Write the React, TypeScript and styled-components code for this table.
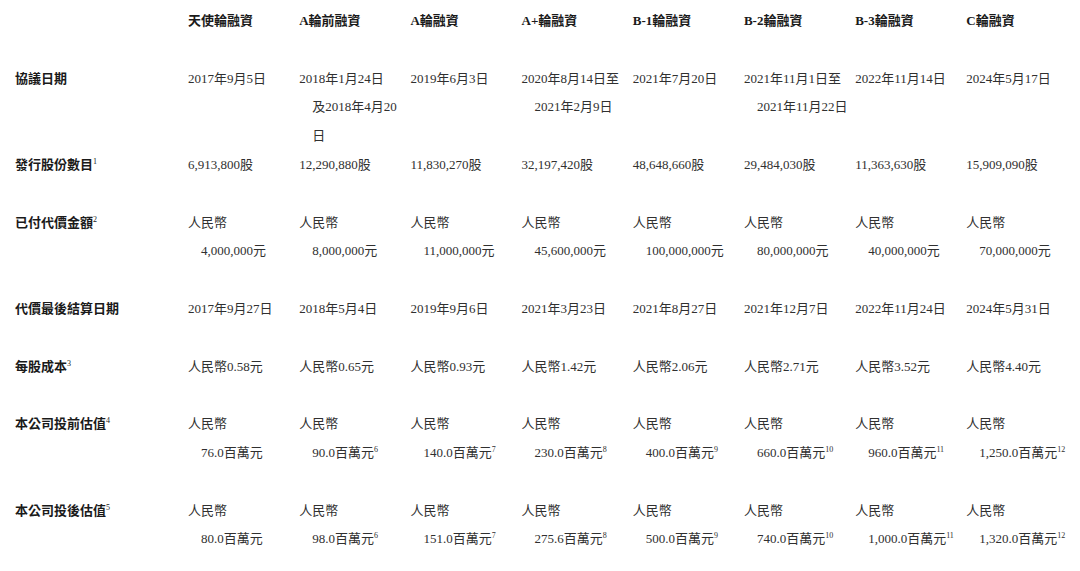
import React from "react";
import styled, { createGlobalStyle } from "styled-components";

const Global = createGlobalStyle`
  html, body { margin: 0; padding: 0; background: #ffffff; }
  body {
    font-family: "Liberation Serif", "Noto Sans CJK TC", serif;
    -webkit-font-smoothing: antialiased;
  }
`;

const Page = styled.div`
  width: 1080px;
  height: 571px;
  overflow: hidden;
  box-sizing: border-box;
  padding: 7px 0 0 15px;
  background: #fff;
`;

const Table = styled.div`
  display: grid;
  grid-template-columns: 173px repeat(7, 111.2px) 1fr;
  font-size: 13px;
  line-height: 28.8px;
  color: #303030;
`;

const Cell = styled.div<{ $pad: boolean }>`
  white-space: nowrap;
  padding-bottom: ${(p) => (p.$pad ? "28.8px" : "0")};
  padding-left: 1em;
  text-indent: -1em;
`;

const HeadCell = styled(Cell)`
  font-weight: 700;
  color: #1a1a1a;
`;

const Label = styled(Cell)`
  font-weight: 700;
  color: #1a1a1a;
  padding-left: 0;
  text-indent: 0;
`;

const Sup = styled.sup`
  font-size: 8px;
  line-height: 0;
  vertical-align: 5px;
  margin-left: 0;
  font-weight: 400;
`;

type Line = { t: string; n?: string };
type Row = { label: Line; cells: Line[][]; pad: boolean };

const headers = [
  "天使輪融資",
  "A輪前融資",
  "A輪融資",
  "A+輪融資",
  "B-1輪融資",
  "B-2輪融資",
  "B-3輪融資",
  "C輪融資",
];

const rmb = (v: string, n?: string): Line[] => [{ t: "人民幣" }, { t: v, n }];
const one = (t: string): Line[] => [{ t }];

const rows: Row[] = [
  {
    label: { t: "協議日期" },
    pad: false,
    cells: [
      one("2017年9月5日"),
      [{ t: "2018年1月24日" }, { t: "及2018年4月20" }, { t: "日" }],
      one("2019年6月3日"),
      [{ t: "2020年8月14日至" }, { t: "2021年2月9日" }],
      one("2021年7月20日"),
      [{ t: "2021年11月1日至" }, { t: "2021年11月22日" }],
      one("2022年11月14日"),
      one("2024年5月17日"),
    ],
  },
  {
    label: { t: "發行股份數目", n: "1" },
    pad: true,
    cells: [
      "6,913,800股",
      "12,290,880股",
      "11,830,270股",
      "32,197,420股",
      "48,648,660股",
      "29,484,030股",
      "11,363,630股",
      "15,909,090股",
    ].map(one),
  },
  {
    label: { t: "已付代價金額", n: "2" },
    pad: true,
    cells: [
      "4,000,000元",
      "8,000,000元",
      "11,000,000元",
      "45,600,000元",
      "100,000,000元",
      "80,000,000元",
      "40,000,000元",
      "70,000,000元",
    ].map((v) => rmb(v)),
  },
  {
    label: { t: "代價最後結算日期" },
    pad: true,
    cells: [
      "2017年9月27日",
      "2018年5月4日",
      "2019年9月6日",
      "2021年3月23日",
      "2021年8月27日",
      "2021年12月7日",
      "2022年11月24日",
      "2024年5月31日",
    ].map(one),
  },
  {
    label: { t: "每股成本", n: "3" },
    pad: true,
    cells: ["0.58", "0.65", "0.93", "1.42", "2.06", "2.71", "3.52", "4.40"].map((v) =>
      one(`人民幣${v}元`)
    ),
  },
  {
    label: { t: "本公司投前估值", n: "4" },
    pad: true,
    cells: [
      rmb("76.0百萬元"),
      rmb("90.0百萬元", "6"),
      rmb("140.0百萬元", "7"),
      rmb("230.0百萬元", "8"),
      rmb("400.0百萬元", "9"),
      rmb("660.0百萬元", "10"),
      rmb("960.0百萬元", "11"),
      rmb("1,250.0百萬元", "12"),
    ],
  },
  {
    label: { t: "本公司投後估值", n: "5" },
    pad: true,
    cells: [
      rmb("80.0百萬元"),
      rmb("98.0百萬元", "6"),
      rmb("151.0百萬元", "7"),
      rmb("275.6百萬元", "8"),
      rmb("500.0百萬元", "9"),
      rmb("740.0百萬元", "10"),
      rmb("1,000.0百萬元", "11"),
      rmb("1,320.0百萬元", "12"),
    ],
  },
];

const Text: React.FC<{ line: Line }> = ({ line }) => (
  <>
    {line.t}
    {line.n && <Sup>{line.n}</Sup>}
  </>
);

export default function App() {
  return (
    <Page>
      <Global />
      <Table>
        <HeadCell $pad={true} />
        {headers.map((h) => (
          <HeadCell key={h} $pad={true}>
            {h}
          </HeadCell>
        ))}
        {rows.map((r) => (
          <React.Fragment key={r.label.t}>
            <Label $pad={r.pad}>
              <Text line={r.label} />
            </Label>
            {r.cells.map((lines, i) => (
              <Cell key={i} $pad={r.pad}>
                {lines.map((l, j) => (
                  <React.Fragment key={j}>
                    {j > 0 && <br />}
                    <Text line={l} />
                  </React.Fragment>
                ))}
              </Cell>
            ))}
          </React.Fragment>
        ))}
      </Table>
    </Page>
  );
}
